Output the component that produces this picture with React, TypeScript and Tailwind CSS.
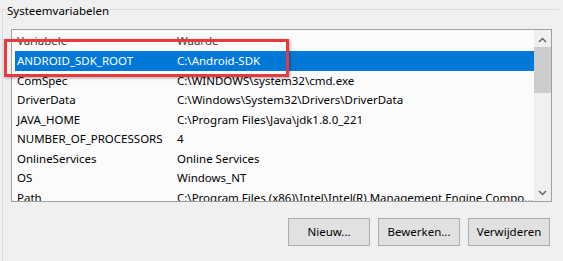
import React from "react";

const rows: [string, string][] = [
  ["ANDROID_SDK_ROOT", "C:\\Android-SDK"],
  ["ComSpec", "C:\\WINDOWS\\system32\\cmd.exe"],
  ["DriverData", "C:\\Windows\\System32\\Drivers\\DriverData"],
  ["JAVA_HOME", "C:\\Program Files\\Java\\jdk1.8.0_221"],
  ["NUMBER_OF_PROCESSORS", "4"],
  ["OnlineServices", "Online Services"],
  ["OS", "Windows_NT"],
  ["Path", "C:\\Program Files (x86)\\Intel\\Intel(R) Management Engine Compo..."],
];

function Chevron({ up }: { up?: boolean }) {
  return (
    <svg width="9" height="6" viewBox="0 0 9 6" className="block">
      <path
        d={up ? "M1 5 L4.5 1.5 L8 5" : "M1 1 L4.5 4.5 L8 1"}
        fill="none"
        stroke="#606060"
        strokeWidth="1.4"
      />
    </svg>
  );
}

export default function App() {
  return (
    <div
      className="relative w-[563px] h-[261px] overflow-hidden bg-[#f0f0f0] text-[11.5px] text-black"
      style={{ fontFamily: '"Noto Sans", "Open Sans", sans-serif' }}
    >
      <div className="pt-[9px] pl-[2px]">
        <div className="border-l border-t border-[#dcdcdc] w-[557px] h-[260px]">
          <div className="-mt-[8px] ml-[3px] w-fit bg-[#f0f0f0] px-[1px] h-[17px] leading-[17px]">
            Systeemvariabelen
          </div>
          <div className="mt-[10px] ml-[8px] w-[541px] h-[173px] border border-[#a0a0a0] bg-[#fbfbfb] flex">
            <div className="flex-1 overflow-hidden pl-[3px]">
              <div className="h-[21px] flex items-center text-[#444]">
                <div className="w-[160px] pl-[2px]">Variabele</div>
                <div className="pl-[2px]">Waarde</div>
              </div>
              {rows.map(([k, v], i) => (
                <div
                  key={k}
                  className={
                    "h-[19.5px] flex items-center whitespace-nowrap " +
                    (i === 0 ? "bg-[#0078d7] text-white" : "")
                  }
                >
                  <div className="w-[160px] pl-[2px] shrink-0">{k}</div>
                  <div className="pl-[2px]">{v}</div>
                </div>
              ))}
            </div>
            <div className="w-[17px] bg-[#f0f0f0] flex flex-col items-center">
              <div className="h-[17px] flex items-center justify-center pt-[2px]">
                <Chevron up />
              </div>
              <div className="w-[17px] h-[46px] bg-[#cdcdcd]" />
              <div className="flex-1" />
              <div className="h-[17px] flex items-center justify-center">
                <Chevron />
              </div>
            </div>
          </div>
          <div className="mt-[16px] ml-[285px] flex gap-[8px]">
            {["Nieuw...", "Bewerken...", "Verwijderen"].map((b) => (
              <div
                key={b}
                className="w-[82px] h-[28px] border border-[#adadad] bg-[#e1e1e1] flex items-center justify-center"
              >
                {b}
              </div>
            ))}
          </div>
        </div>
      </div>
      <div className="absolute left-[4px] top-[39px] w-[285px] h-[38px] border-[3px] border-[#e8393e] shadow-[1px_1px_3px_rgba(0,0,0,0.35)]" />
    </div>
  );
}
